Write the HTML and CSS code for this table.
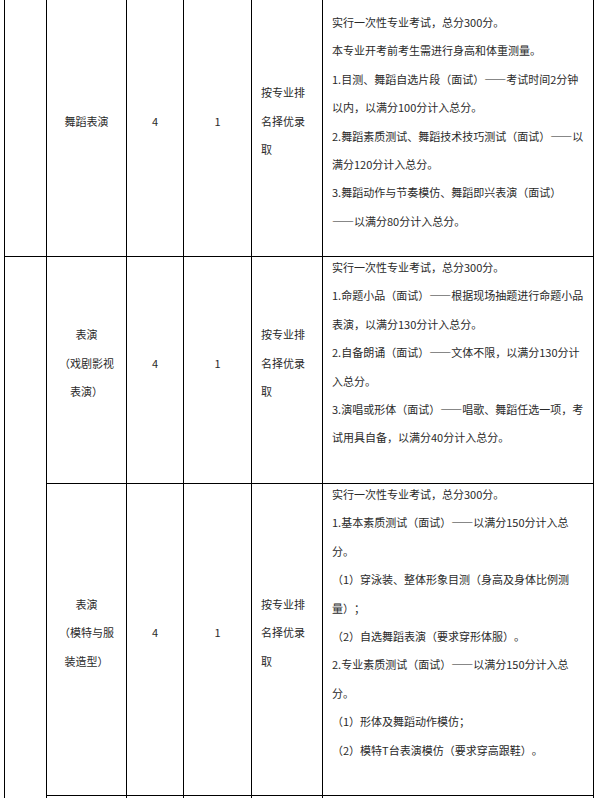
FILE: index.html
```html
<!DOCTYPE html>
<html lang="zh-CN">
<head>
<meta charset="utf-8">
<title>专业考试说明</title>
<link rel="stylesheet" href="styles.css">
</head>
<body>
<table class="grid">
  <colgroup>
    <col class="col-a">
    <col class="col-b">
    <col class="col-c">
    <col class="col-d">
    <col class="col-e">
    <col class="col-f">
  </colgroup>
  <tbody>
    <tr class="row row-1">
      <td class="cell blank"></td>
      <td class="cell name">舞蹈表演</td>
      <td class="cell num">4</td>
      <td class="cell num">1</td>
      <td class="cell rule">按专业排名择优录取</td>
      <td class="cell detail detail-first">
        <div class="text">
          <p>实行一次性专业考试，总分300分。</p>
          <p>本专业开考前考生需进行身高和体重测量。</p>
          <p>1.目测、舞蹈自选片段（面试）<span class="dash">——</span>考试时间2分钟以内，以满分100分计入总分。</p>
          <p>2.舞蹈素质测试、舞蹈技术技巧测试（面试）<span class="dash">——</span>以满分120分计入总分。</p>
          <p>3.舞蹈动作与节奏模仿、舞蹈即兴表演（面试）<span class="keep"><span class="dash">——</span>以满分80分计入总分。</span></p>
        </div>
      </td>
    </tr>
    <tr class="row row-2">
      <td class="cell blank" rowspan="3"></td>
      <td class="cell name">表演<br>（戏剧影视表演）</td>
      <td class="cell num">4</td>
      <td class="cell num">1</td>
      <td class="cell rule">按专业排名择优录取</td>
      <td class="cell detail">
        <div class="text">
          <p>实行一次性专业考试，总分300分。</p>
          <p>1.命题小品（面试）<span class="dash">——</span>根据现场抽题进行命题小品表演，以满分130分计入总分。</p>
          <p>2.自备朗诵（面试）<span class="dash">——</span>文体不限，以满分130分计入总分。</p>
          <p>3.演唱或形体（面试）<span class="dash">——</span>唱歌、舞蹈任选一项，考试用具自备，以满分40分计入总分。</p>
        </div>
      </td>
    </tr>
    <tr class="row row-3">
      <td class="cell name">表演<br>（模特与服装造型）</td>
      <td class="cell num">4</td>
      <td class="cell num">1</td>
      <td class="cell rule">按专业排名择优录取</td>
      <td class="cell detail">
        <div class="text">
          <p>实行一次性专业考试，总分300分。</p>
          <p>1.基本素质测试（面试）<span class="dash">——</span>以满分150分计入总分。</p>
          <p>（1）穿泳装、整体形象目测（身高及身体比例测量）；</p>
          <p>（2）自选舞蹈表演（要求穿形体服）。</p>
          <p>2.专业素质测试（面试）<span class="dash">——</span>以满分150分计入总分。</p>
          <p>（1）形体及舞蹈动作模仿；</p>
          <p>（2）模特T台表演模仿（要求穿高跟鞋）。</p>
        </div>
      </td>
    </tr>
    <tr class="row row-4">
      <td class="cell"></td>
      <td class="cell"></td>
      <td class="cell"></td>
      <td class="cell"></td>
      <td class="cell"></td>
    </tr>
  </tbody>
</table>
</body>
</html>
```

FILE: styles.css
```css
html, body {
  margin: 0;
  padding: 0;
  overflow: hidden;
  background: #fff;
}

body {
  font-family: "Noto Sans CJK SC", "Noto Sans", sans-serif;
  font-size: 11px;
  color: #2a2a2a;
  text-spacing-trim: space-all;
}

.grid {
  border-collapse: collapse;
  table-layout: fixed;
  width: 589px;
  margin: -1px 0 0 4px;
}

.col-a { width: 42px; }
.col-b { width: 80px; }
.col-c { width: 57px; }
.col-d { width: 68px; }
.col-e { width: 71px; }
.col-f { width: 271px; }

.cell {
  border: 1px solid #000;
  padding: 0;
  line-height: 28.4px;
}

.row-1 { height: 257px; }
.row-2 { height: 227px; }
.row-3 { height: 312px; }
.row-4 { height: 40px; }

.name {
  text-align: center;
  vertical-align: middle;
  padding: 0 9px 14px;
}

.num {
  text-align: center;
  vertical-align: middle;
  padding: 0 0 14px;
}

.rule {
  vertical-align: middle;
  padding: 0 9px 14px;
}

.detail {
  vertical-align: top;
  padding: 0 6px 0 9px;
}

.detail-first {
  padding-top: 12px;
}

.text {
  margin-top: -4px;
}

.text p {
  margin: 0;
}

.dash {
  font-variant-east-asian: full-width;
}

.keep {
  white-space: nowrap;
}
```
